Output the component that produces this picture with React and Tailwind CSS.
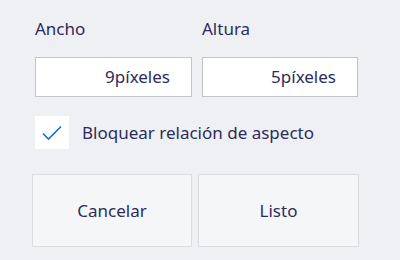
export default function App() {
  const font = { fontFamily: '"Noto Sans", "Open Sans", sans-serif' };
  return (
    <div className="w-[400px] h-[260px] bg-[#eff0f3] text-[#2c2c5c] overflow-hidden" style={font}>
      <div className="pt-[17px] pl-[35px] flex gap-[10px]">
        <div className="w-[157px] flex flex-col">
          <div className="text-[17px] leading-[24px] h-[40px]">Ancho</div>
          <div className="h-[40px] bg-white border border-[#c4c4c4] flex items-center justify-end pr-[21px] text-[17px]">9píxeles</div>
        </div>
        <div className="w-[156px] flex flex-col">
          <div className="text-[17px] leading-[24px] h-[40px]">Altura</div>
          <div className="h-[40px] bg-white border border-[#c4c4c4] flex items-center justify-end pr-[21px] text-[17px]">5píxeles</div>
        </div>
      </div>
      <div className="mt-[19px] pl-[35px] flex items-center gap-[13px]">
        <div className="w-[34px] h-[33px] bg-white flex items-center justify-center">
          <svg width="22" height="16" viewBox="0 0 22 16" fill="none">
            <path d="M2 8.5 L7.5 14 L20 1.5" stroke="#1a6fc6" strokeWidth="1.6" />
          </svg>
        </div>
        <div className="text-[17px]">Bloquear relación de aspecto</div>
      </div>
      <div className="mt-[25px] pl-[32px] flex gap-[6px]">
        <button className="w-[160px] h-[73px] bg-[#f5f6f8] border border-[#dcdcdc] text-[17px] flex items-center justify-center">Cancelar</button>
        <button className="w-[161px] h-[73px] bg-[#f5f6f8] border border-[#dcdcdc] text-[17px] flex items-center justify-center">Listo</button>
      </div>
    </div>
  );
}
